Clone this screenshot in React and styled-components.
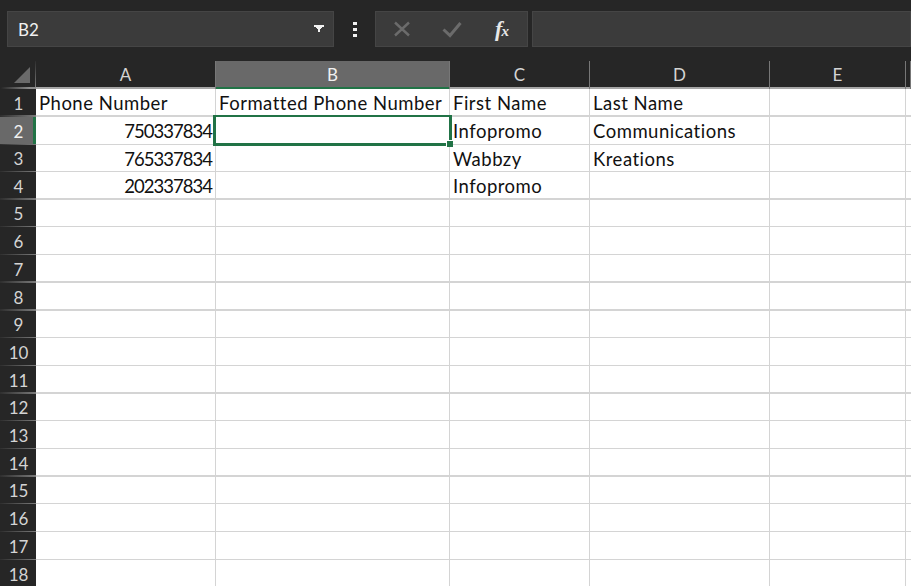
import React from "react";
import styled, { createGlobalStyle } from "styled-components";

const columns = ["A", "B", "C", "D", "E", ""];

// row heights and which rows end on the heavier line
const rowHeights = [28, 28, 27, 28, 27, 28, 28, 28, 27, 28, 28, 27, 28, 28, 27, 28, 28, 28];
const thickRows = [1, 4, 7, 8, 11, 14];

const cells = {
  1: ["Phone Number", "Formatted Phone Number", "First Name", "Last Name"],
  2: ["750337834", "", "Infopromo", "Communications"],
  3: ["765337834", "", "Wabbzy", "Kreations"],
  4: ["202337834", "", "Infopromo", ""],
};

const App = () => {
  return (
    <>
      <GlobalStyle />
      <Window>
        <FormulaBar>
          <NameBox>
            <span>B2</span>
            <svg width="10" height="7" viewBox="0 0 10 7">
              <path d="M0 0h10v2H8v1H7v1H6v3H4V4H3V3H2V2H0z" fill="#f2f2f2" />
            </svg>
          </NameBox>
          <Grip>
            <i />
            <i />
            <i />
          </Grip>
          <ActionBox>
            <ActionButton>
              <svg width="18" height="16" viewBox="0 0 18 16">
                <path d="M2 1.5 16 14.5M16 1.5 2 14.5" stroke="#6b6b6b" strokeWidth="2.4" fill="none" />
              </svg>
            </ActionButton>
            <ActionButton>
              <svg width="20" height="17" viewBox="0 0 20 17">
                <path d="M1.5 8.5 8 14.5 18.5 2" stroke="#6b6b6b" strokeWidth="3" fill="none" />
              </svg>
            </ActionButton>
            <FxButton>
              f<sub>x</sub>
            </FxButton>
          </ActionBox>
          <FormulaInput />
        </FormulaBar>
        <Sheet>
          <HeaderRow>
            <Corner>
              <svg width="16" height="16" viewBox="0 0 16 16">
                <path d="M16 0V16H0z" fill="#6a6a6a" />
              </svg>
            </Corner>
            {columns.map((name, i) => (
              <ColumnHead key={i} $active={name === "B"}>
                {name}
              </ColumnHead>
            ))}
          </HeaderRow>
          {rowHeights.map((height, r) => {
            const row = r + 1;
            const thick = thickRows.includes(row);
            return (
              <Row key={row} $height={height}>
                <RowHead $active={row === 2} $thick={thick}>
                  {row}
                </RowHead>
                {columns.map((name, c) => (
                  <Cell key={c} $thick={thick} $number={row > 1 && c === 0}>
                    {cells[row]?.[c]}
                    {row === 2 && name === "B" && <Selection />}
                  </Cell>
                ))}
              </Row>
            );
          })}
        </Sheet>
      </Window>
    </>
  );
};

const GlobalStyle = createGlobalStyle`
  html, body {
    margin: 0;
    padding: 0;
    height: 100%;
    overflow: hidden;
    background-color: #262626;
  }
`;

const Window = styled.div`
  width: 911px;
  height: 586px;
  overflow: hidden;
  font-family: Lato, "Open Sans", sans-serif;
`;

const FormulaBar = styled.div`
  display: flex;
  align-items: center;
  height: 61px;
  padding: 0 0 3px 7px;
  box-sizing: border-box;
  background-color: #262626;
`;

const NameBox = styled.div`
  display: flex;
  align-items: center;
  justify-content: space-between;
  box-sizing: border-box;
  width: 327px;
  height: 36px;
  padding: 0 9px 0 10px;
  background-color: #3b3b3b;
  border: 1px solid #454545;
  color: #f0f0f0;
  font-size: 17px;

  svg {
    margin-bottom: 2px;
  }
`;

const Grip = styled.div`
  display: flex;
  flex-direction: column;
  gap: 3px;
  width: 41px;
  align-items: center;

  i {
    display: block;
    width: 4px;
    height: 3px;
    background-color: #f2f2f2;
  }
`;

const ActionBox = styled.div`
  display: flex;
  align-items: center;
  box-sizing: border-box;
  width: 153px;
  height: 36px;
  padding-left: 1px;
  background-color: #3b3b3b;
  border: 1px solid #454545;
`;

const ActionButton = styled.div`
  display: flex;
  align-items: center;
  justify-content: center;
  width: 50px;
  height: 100%;
`;

const FxButton = styled.div`
  width: 50px;
  text-align: center;
  color: #e8e8e8;
  font-family: "Liberation Serif", serif;
  font-style: italic;
  font-weight: 700;
  font-size: 22px;
  line-height: 32px;

  sub {
    font-size: 15px;
    line-height: 0;
    vertical-align: 0;
    margin-left: -1px;
  }
`;

const FormulaInput = styled.div`
  flex: 1;
  box-sizing: border-box;
  height: 36px;
  margin-left: 4px;
  background-color: #3b3b3b;
  border: 1px solid #454545;
`;

const Sheet = styled.div`
  display: flex;
  flex-direction: column;
`;

const trackColumns = "36px 180px 234px 140px 180px 136px 5px";

const HeaderRow = styled.div`
  display: grid;
  grid-template-columns: ${trackColumns};
  height: 28px;
  background-color: #262626;
`;

const Corner = styled.div`
  position: relative;
  display: flex;
  align-items: flex-end;
  justify-content: flex-end;
  box-sizing: border-box;
  padding: 0 6px 4px 0;
  border-bottom: 2px solid #a6a6a6;
  border-image: linear-gradient(to right, #262626 5%, #8c8c8c 80%) 1;

  /* thin divider on the right fades out toward the top */
  &::after {
    content: "";
    position: absolute;
    top: 0;
    right: 0;
    bottom: 0;
    width: 1px;
    background: linear-gradient(to bottom, #2e2e2e, #7a7a7a);
  }
`;

const ColumnHead = styled.div`
  box-sizing: border-box;
  text-align: center;
  font-size: 17px;
  line-height: 27px;
  color: ${(p) => (p.$active ? "#f0f0f0" : "#d4d4d4")};
  background-color: ${(p) => (p.$active ? "#696969" : "transparent")};
  border-right: 1px solid #777;
  box-shadow: inset 0 -2px 0 ${(p) => (p.$active ? "#217346" : "#a6a6a6")};
`;

const Row = styled.div`
  display: grid;
  grid-template-columns: ${trackColumns};
  grid-template-rows: minmax(0, 1fr);
  height: ${(p) => p.$height}px;
`;

const RowHead = styled.div`
  position: relative;
  box-sizing: border-box;
  display: flex;
  align-items: center;
  justify-content: center;
  font-size: 17px;
  color: ${(p) => (p.$active ? "#f0f0f0" : "#d4d4d4")};
  background-color: ${(p) => (p.$active ? "#696969" : "#262626")};
  padding-left: 1px;

  /* line under the header fades out toward the left */
  &::after {
    content: "";
    position: absolute;
    left: 0;
    right: 0;
    bottom: 0;
    height: ${(p) => (p.$thick ? 2 : 1)}px;
    background: linear-gradient(to right, #2e2e2e, #7a7a7a);
  }

  ${(p) => p.$active && "box-shadow: inset -3px 0 0 #217346;"}
`;

const Cell = styled.div`
  position: relative;
  box-sizing: border-box;
  background-color: #fff;
  border-right: 1px solid #d4d4d4;
  border-bottom: ${(p) => (p.$thick ? 2 : 1)}px solid #d4d4d4;
  padding: 2px 3px 0;
  font-size: 18.5px;
  line-height: 25px;
  color: #111;
  white-space: nowrap;
  text-align: ${(p) => (p.$number ? "right" : "left")};
  letter-spacing: ${(p) => (p.$number ? "-0.97px" : "0.5px")};
`;

const Selection = styled.div`
  position: absolute;
  top: -2px;
  left: -3px;
  width: 233px;
  height: 26px;
  border-style: solid;
  border-color: #217346;
  border-width: 2px 3px 3px;
  z-index: 2;
  pointer-events: none;

  &::after {
    content: "";
    position: absolute;
    right: -4px;
    bottom: -4px;
    width: 6px;
    height: 6px;
    background-color: #217346;
    border-top: 1px solid #fff;
    border-left: 1px solid #fff;
  }
`;

export default App;
